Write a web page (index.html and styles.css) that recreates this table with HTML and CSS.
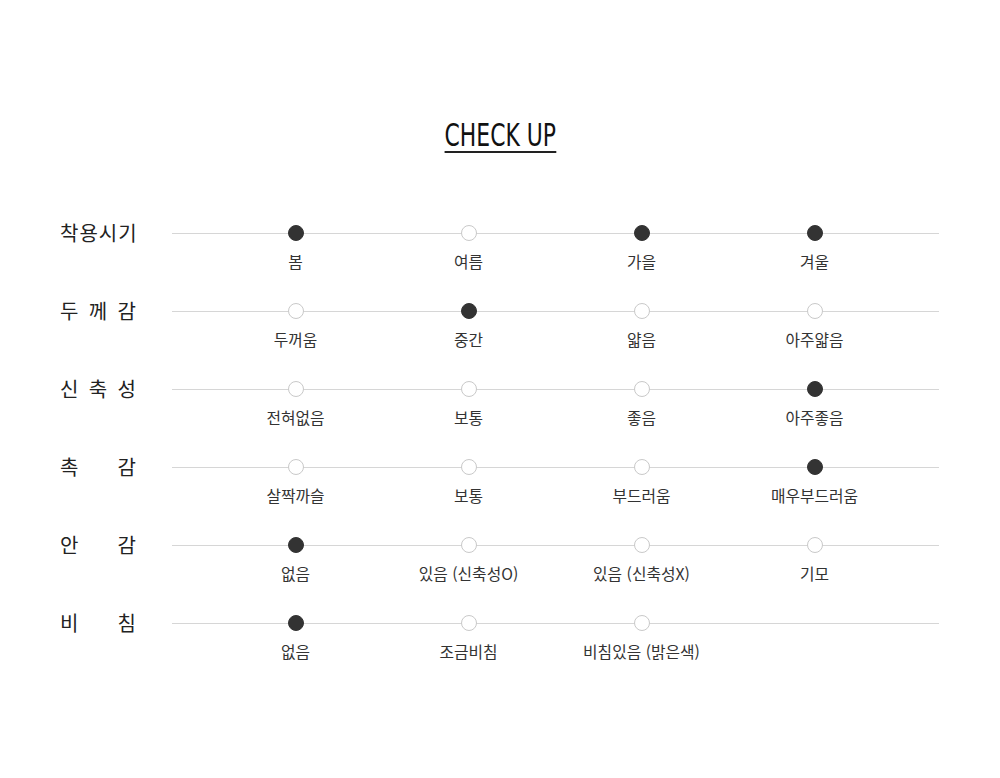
FILE: index.html
```html
<!DOCTYPE html>
<html lang="ko">
<head>
<meta charset="utf-8">
<title>CHECK UP</title>
<link rel="stylesheet" href="styles.css">
</head>
<body>
<div class="page">
  <h2 class="title"><span class="title-text">CHECK UP</span></h2>
  <div class="chart">
    <div class="row">
      <div class="label">착용시기</div>
      <div class="track">
        <div class="opt on"><span class="dot"></span><span class="txt">봄</span></div>
        <div class="opt"><span class="dot"></span><span class="txt">여름</span></div>
        <div class="opt on"><span class="dot"></span><span class="txt">가을</span></div>
        <div class="opt on"><span class="dot"></span><span class="txt">겨울</span></div>
      </div>
    </div>
    <div class="row">
      <div class="label">두 께 감</div>
      <div class="track">
        <div class="opt"><span class="dot"></span><span class="txt">두꺼움</span></div>
        <div class="opt on"><span class="dot"></span><span class="txt">중간</span></div>
        <div class="opt"><span class="dot"></span><span class="txt">얇음</span></div>
        <div class="opt"><span class="dot"></span><span class="txt">아주얇음</span></div>
      </div>
    </div>
    <div class="row">
      <div class="label">신 축 성</div>
      <div class="track">
        <div class="opt"><span class="dot"></span><span class="txt">전혀없음</span></div>
        <div class="opt"><span class="dot"></span><span class="txt">보통</span></div>
        <div class="opt"><span class="dot"></span><span class="txt">좋음</span></div>
        <div class="opt on"><span class="dot"></span><span class="txt">아주좋음</span></div>
      </div>
    </div>
    <div class="row">
      <div class="label">촉 감</div>
      <div class="track">
        <div class="opt"><span class="dot"></span><span class="txt">살짝까슬</span></div>
        <div class="opt"><span class="dot"></span><span class="txt">보통</span></div>
        <div class="opt"><span class="dot"></span><span class="txt">부드러움</span></div>
        <div class="opt on"><span class="dot"></span><span class="txt">매우부드러움</span></div>
      </div>
    </div>
    <div class="row">
      <div class="label">안 감</div>
      <div class="track">
        <div class="opt on"><span class="dot"></span><span class="txt">없음</span></div>
        <div class="opt"><span class="dot"></span><span class="txt">있음 (신축성O)</span></div>
        <div class="opt"><span class="dot"></span><span class="txt">있음 (신축성X)</span></div>
        <div class="opt"><span class="dot"></span><span class="txt">기모</span></div>
      </div>
    </div>
    <div class="row">
      <div class="label">비 침</div>
      <div class="track">
        <div class="opt on"><span class="dot"></span><span class="txt">없음</span></div>
        <div class="opt"><span class="dot"></span><span class="txt">조금비침</span></div>
        <div class="opt"><span class="dot"></span><span class="txt">비침있음 (밝은색)</span></div>
      </div>
    </div>
  </div>
</div>
</body>
</html>
```
FILE: styles.css
```css
html, body {
  margin: 0;
  padding: 0;
  background: #fff;
}

.page {
  width: 1000px;
  padding-top: 118px;
  font-family: "Noto Sans CJK KR", "Noto Sans", sans-serif;
  color: #222;
}

.title {
  margin: 0;
  text-align: center;
  font-weight: normal;
}

.title-text {
  display: inline-block;
  font-family: "Liberation Sans Narrow", "DejaVu Sans Condensed", "Liberation Sans", sans-serif;
  font-size: 32px;
  line-height: 32px;
  height: 32px;
  color: #111;
  border-bottom: 2px solid #222;
  transform: scaleX(0.76);
}

.chart {
  margin-top: 72px;
  padding-left: 60px;
}

.row {
  display: flex;
  align-items: flex-start;
  margin-bottom: 31px;
}

.label {
  width: 77px;
  margin-right: 35px;
  font-size: 20px;
  letter-spacing: 1px;
  line-height: 16px;
  height: 16px;
  text-align: justify;
  text-align-last: justify;
  color: #222;
  white-space: nowrap;
}

.track {
  width: 767px;
  display: grid;
  grid-template-columns: repeat(4, 173px);
  padding-left: 37px;
  box-sizing: border-box;
  background-image: linear-gradient(#d6d6d6, #d6d6d6);
  background-repeat: no-repeat;
  background-position: 0 8px;
  background-size: 100% 1px;
}

.opt {
  display: flex;
  flex-direction: column;
  align-items: center;
}

.dot {
  width: 16px;
  height: 16px;
  border-radius: 50%;
  box-sizing: border-box;
  background: #fff;
  border: 1px solid #c9c9c9;
}

.opt.on .dot {
  background: #333;
  border-color: #333;
}

.txt {
  margin-top: 11px;
  font-size: 15.8px;
  line-height: 20px;
  color: #333;
  white-space: nowrap;
}
```
